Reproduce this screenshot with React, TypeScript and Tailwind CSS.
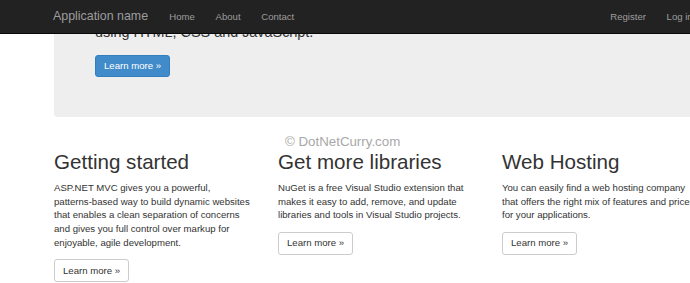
const font = { fontFamily: '"Liberation Sans", Arial, sans-serif' };

const columns = [
  {
    title: 'Getting started',
    text: (
      <>
        ASP.NET MVC gives you a powerful, <span className="whitespace-nowrap">patterns-based</span> way to build
        dynamic websites that enables a clean separation of concerns and gives you full control over markup for
        enjoyable, agile development.
      </>
    ),
  },
  {
    title: 'Get more libraries',
    text: 'NuGet is a free Visual Studio extension that makes it easy to add, remove, and update libraries and tools in Visual Studio projects.',
  },
  {
    title: 'Web Hosting',
    text: 'You can easily find a web hosting company that offers the right mix of features and prices for your applications.',
  },
];

export default function App() {
  return (
    <div className="relative w-[690px] h-[283px] overflow-hidden bg-white text-[#333]" style={font}>
      {/* fixed navbar */}
      <div className="absolute top-0 left-0 right-0 z-10 h-[34px] bg-[#222] border-b border-[#080808] flex items-center text-[#9d9d9d]">
        <span className="ml-[53px] text-[12.4px] leading-none whitespace-nowrap">Application name</span>
        <nav className="ml-[11px] flex text-[9.6px] leading-none whitespace-nowrap">
          <span className="px-[10.3px]">Home</span>
          <span className="px-[10.3px]">About</span>
          <span className="px-[10.3px]">Contact</span>
        </nav>
        <nav className="ml-auto mr-[-13px] shrink-0 flex text-[9.6px] leading-none whitespace-nowrap">
          <span className="px-[10.3px]">Register</span>
          <span className="px-[10.3px]">Log in</span>
        </nav>
      </div>

      <div className="ml-[54px] w-[651px]">
        <div className="-mt-[85px] bg-[#eee] rounded-b-[4px] pt-[33px] px-[41px] pb-[40px]">
          <h1 className="text-[43px] leading-[47px] mb-[7px]">ASP.NET</h1>
          <p className="text-[14.4px] leading-[20px] mb-[10px] whitespace-nowrap">
            ASP.NET is a free web framework for building great Web sites and Web applications
            <br />
            using HTML, CSS and JavaScript.
          </p>
          <button className="h-[22px] px-[8px] text-[9.6px] text-white bg-[#428bca] border border-[#357ebd] rounded-[3px]">
            Learn more &raquo;
          </button>
        </div>

        <div className="mt-[34px] grid grid-cols-[196px_196px_196px] gap-x-[28px]">
          {columns.map((c) => (
            <div key={c.title}>
              <h2 className="text-[20.6px] leading-[22.7px] mb-[7px] whitespace-nowrap">{c.title}</h2>
              <p className="text-[9.6px] leading-[13.74px] mb-[7px]">{c.text}</p>
              <button className="h-[23px] px-[8px] text-[9.6px] text-[#333] bg-white border border-[#ccc] rounded-[3px]">
                Learn more &raquo;
              </button>
            </div>
          ))}
        </div>
      </div>

      <span className="absolute left-[285px] top-[132px] text-[13.3px] text-[#a8a8a8]">
        &copy; DotNetCurry.com
      </span>
    </div>
  );
}
